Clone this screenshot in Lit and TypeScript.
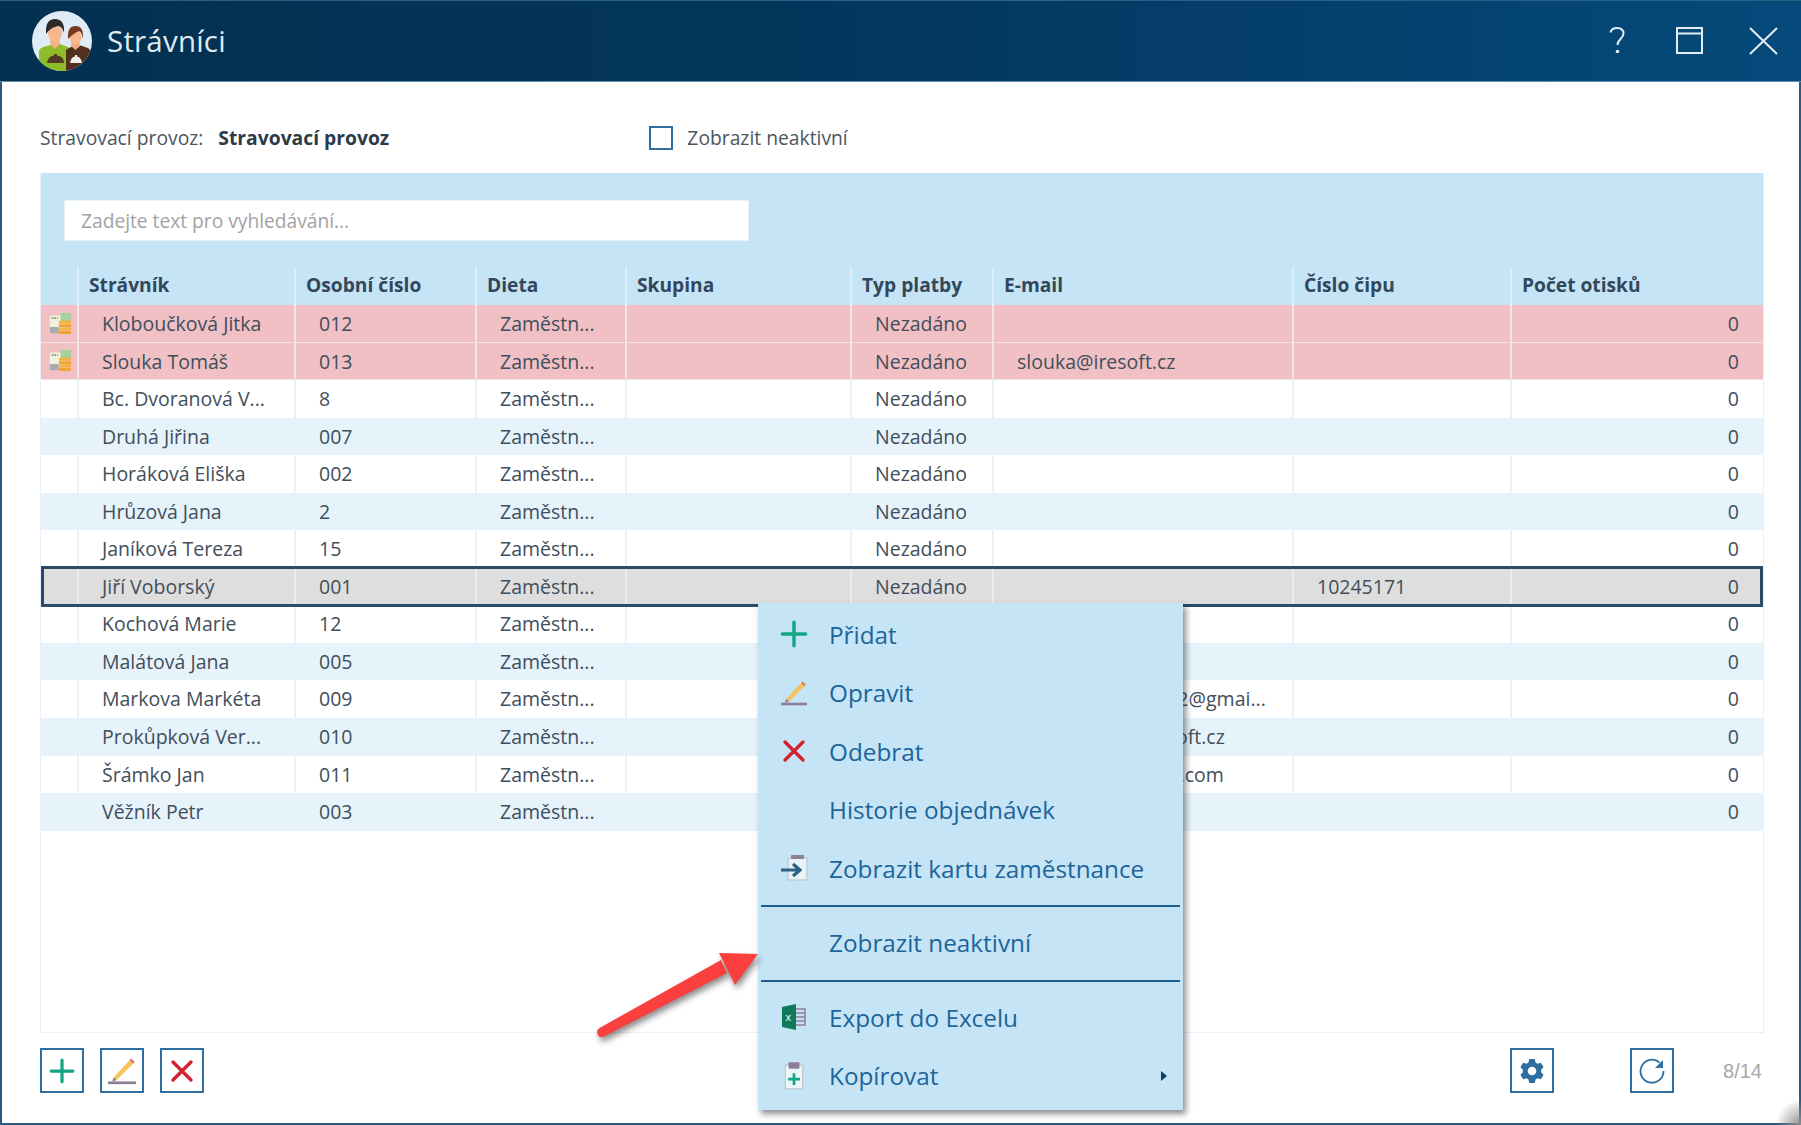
import { LitElement, html, css, svg } from "lit";
import { customElement } from "lit/decorators.js";

type Row = { name: string; no: string; mail?: string; chip?: string; kind?: string; coins?: boolean };
const rows: Row[] = [
  { name: "Kloboučková Jitka", no: "012", kind: "late", coins: true },
  { name: "Slouka Tomáš", no: "013", mail: "slouka@iresoft.cz", kind: "late", coins: true },
  { name: "Bc. Dvoranová V...", no: "8" },
  { name: "Druhá Jiřina", no: "007", kind: "alt" },
  { name: "Horáková Eliška", no: "002" },
  { name: "Hrůzová Jana", no: "2", kind: "alt" },
  { name: "Janíková Tereza", no: "15" },
  { name: "Jiří Voborský", no: "001", chip: "10245171", kind: "sel" },
  { name: "Kochová Marie", no: "12" },
  { name: "Malátová Jana", no: "005", kind: "alt" },
  { name: "Markova Markéta", no: "009", mail: "marketa.markova2@gmai...", },
  { name: "Prokůpková Ver...", no: "010", mail: "prokupkova@iresoft.cz", kind: "alt" },
  { name: "Šrámko Jan", no: "011", mail: "sramkojan@gmail.com" },
  { name: "Věžník Petr", no: "003", kind: "alt" },
];

const plus = svg`<path d="M12 2v20M2 12h20" stroke="#14a585" stroke-width="3" fill="none" stroke-linecap="round"/>`;
const pencil = svg`<path d="M1 25h26" stroke="#8c7f97" stroke-width="2.6"/><path d="M6 20 21 4l3.4 3.2L9 22.5l-3.8 1z" fill="#f7c35c"/><path d="M21 4l1.5-1.6 3.4 3.2-1.5 1.6z" fill="#e2735f"/><path d="M6 20l3 2.5-4 1.5z" fill="#8c7f97"/>`;
const cross = svg`<path d="M3 3l18 18M21 3 3 21" stroke="#d0222f" stroke-width="3.4" fill="none" stroke-linecap="round"/>`;

@customElement("app-root")
export class AppRoot extends LitElement {
  static styles = css`
    :host { display: block; width: 1801px; height: 1125px; overflow: hidden; position: relative; font-family: "Open Sans", sans-serif; }
    .win { box-sizing: border-box; width: 1801px; height: 1125px; display: flex; flex-direction: column; background: #fff; border: solid #2b5a7f; border-width: 0 2px 2px 2px; }
    .bar { height: 82px; margin: 0 -2px; flex: none; display: flex; align-items: center; padding: 0 23px 0 32px; gap: 15px; background: linear-gradient(90deg, #03304f 0%, #03365c 45%, #054a7b 100%); border-top: 1px solid #2a6187; border-bottom: 1px solid #5f8db0; box-sizing: border-box; color: #dfeaf2; }
    .bar .title { font-size: 29.5px; flex: 1; letter-spacing: 0.2px; margin-bottom: 1px; }
    .bar .tools { display: flex; align-items: center; gap: 46px; margin-bottom: 1px; }
    .bar .help { margin-right: 5px; }
    .content { flex: 1; display: flex; flex-direction: column; padding: 0 35px 0 38px; min-height: 0; }
    .filter { flex: none; display: flex; align-items: center; font-size: 19.3px; color: #4b5660; padding-top: 20px; box-sizing: border-box; height: 91px; }
    .filter b { color: #2c3b4a; margin-left: 15px; font-weight: 700; width: 431px; white-space: nowrap; }
    .check { width: 20px; height: 20px; border: 2px solid #2f6e9f; margin-right: 14px; flex: none; }
    .panel { flex: none; height: 860px; box-sizing: border-box; border: 1px solid #e9f0fb; border-top: 0; display: flex; flex-direction: column; }
    .search { background: #c5e4f6; height: 94px; flex: none; padding: 27px 24px 0 23px; box-sizing: border-box; }
    .search div { width: 685px; height: 41px; background: #fff; box-sizing: border-box; padding-left: 16px; line-height: 40px; color: #a2a2a2; font-size: 19.2px; border: 1px solid #e6f1f8; }
    .row { display: grid; flex: none; grid-template-columns: 36px 217px 181px 150px 225px 142px 300px 218px 1fr; height: 37.55px; font-size: 19.5px; color: #414e5b; box-sizing: border-box; }
    .row > div { border-left: 2px solid #e8f2fa; padding-left: 23px; white-space: nowrap; overflow: hidden; line-height: 37.5px; box-sizing: border-box; }
    .row > div:first-child { border-left: 0; padding: 0 0 0 2px; display: flex; align-items: center; justify-content: center; }
    .row > div:last-child { text-align: right; padding-right: 24px; }
    .head { background: #c5e4f6; height: 38px; font-weight: 700; font-size: 19.2px; color: #34475a; }
    .head > div { padding-left: 10px; line-height: 36px; border-color: #dcedf8; }
    .row.head > div:last-child { text-align: left; }
    .late { background: #f1c0c4; border-bottom: 1px solid #f4dfe3; }
    .late > div { border-color: #f6e3e7; }
    .alt { background: #e6f3fb; }
    .sel { background: #dedede; outline: 3px solid #2b4a68; outline-offset: -3px; position: relative; z-index: 1; height: 41.55px; margin: -2px 0; }
    .sel > div { border-color: #ececec; padding-top: 2px; }
    .foot { flex: 1; display: flex; align-items: flex-start; padding-top: 15px; }
    .btn { width: 44px; height: 45px; box-sizing: border-box; border: 2px solid #2f6e9f; display: flex; align-items: center; justify-content: center; margin-right: 16px; }
    .spacer { flex: 1; }
    .pager { font-family: "Liberation Sans", sans-serif; font-size: 20px; color: #a7a7a7; margin: 12px 2px 0 49px; }
    .gear { margin-right: 76px; }
    .refresh { margin-right: 0; }
    .menu { position: absolute; left: 758px; top: 603px; width: 425px; height: 507px; box-sizing: border-box; padding-top: 2px; background: #c5e4f6; box-shadow: 3px 4px 6px rgba(40, 50, 60, .55); color: #1d6499; font-size: 24.3px; z-index: 2; }
    .item { height: 58.5px; display: grid; grid-template-columns: 71px 1fr 22px; align-items: center; }
    .ico { display: flex; justify-content: center; padding-left: 0; width: 71px; }
    .sep { height: 2px; margin: 7.5px 3px 6.5px 3px; background: #1d5f8f; }
    .caret { width: 0; height: 0; border-left: 6px solid #0d3d66; border-top: 5px solid transparent; border-bottom: 5px solid transparent; }
    .arrow { position: absolute; left: 590px; top: 940px; overflow: visible; filter: drop-shadow(2px 4px 3px rgba(0, 0, 0, .45)); z-index: 3; }
    .corner { position: absolute; right: 0; bottom: 0; width: 24px; height: 24px; background: radial-gradient(circle at 100% 100%, #8f8f8f 0, rgba(255,255,255,0) 75%); }
  `;

  coins() {
    return html`<svg width="25" height="23" viewBox="0 0 28 26">
      <rect x="2" y="4" width="17" height="14" fill="#f3f1dc"/>
      <rect x="14" y="1" width="12" height="11" fill="#a8cf9c"/>
      <rect x="2" y="17" width="10" height="7" rx="1" fill="#a9aaad"/>
      <path d="M4 7h7" stroke="#7d9a74" stroke-width="2" stroke-dasharray="2 1"/>
      <rect x="12" y="10" width="14" height="3.4" rx="1.500" fill="#f6b13f"/>
      <rect x="12" y="13.800" width="14" height="3.4" rx="1.500" fill="#efa332"/>
      <rect x="12" y="17.600" width="14" height="3.4" rx="1.500" fill="#f6b13f"/>
      <rect x="12" y="21.400" width="14" height="3.4" rx="1.500" fill="#efa332"/>
    </svg>`;
  }

  avatar() {
    return html`<svg width="60" height="60" viewBox="0 0 60 60">
      <defs><clipPath id="av"><circle cx="30" cy="30" r="30"/></clipPath></defs>
      <g clip-path="url(#av)">
        <rect width="60" height="60" fill="#dfecf6"/>
        <path d="M7 60V40q1-4 8-5l7-2h6l8 3 2 2v22z" fill="#8fbd2a"/>
        <path d="M34 60V39l3-2 6-3h4l6 2q5 1 6 5v19z" fill="#52301f"/>
        <path d="M18 33l1-8h8l1 8-5 5z" fill="#f4b286"/>
        <ellipse cx="23" cy="22" rx="7" ry="9" fill="#f6b88c"/>
        <path d="M14 23q-1-15 9-15t9 14q-2-7-6-7-7 1-12 8z" fill="#2b2a28"/>
        <path d="M39 35l1-6h7l1 6-4.500 4z" fill="#f0ad82"/>
        <ellipse cx="43.500" cy="26" rx="6" ry="7.500" fill="#f5b78c"/>
        <path d="M36 28q-1-13 7.500-13T51 28q-1-7-4-8-5 2-11 8z" fill="#7a3a22"/>
        <path d="M15 52q1-7 7-7.500V43h3v1.500q7 .5 7 7.500z" fill="#4f3b26"/>
        <path d="M38 52q1-6 5-6.500V44h2v1.500q4 .5 5 6.500z" fill="#eee"/>
      </g>
    </svg>`;
  }

  render() {
    const cols = ["", "Strávník", "Osobní číslo", "Dieta", "Skupina", "Typ platby", "E-mail", "Číslo čipu", "Počet otisků"];
    return html`
      <div class="win">
        <div class="bar">
          ${this.avatar()}
          <div class="title">Strávníci</div>
          <div class="tools">
            <svg class="help" width="16" height="27" viewBox="0 0 16 27"><path d="M1.500 5.500Q2.500 1 8 1q6.500 0 6.500 5.500c0 5-6 5.500-6 11.500" fill="none" stroke="#e3edf4" stroke-width="2"/><circle cx="8.500" cy="24.500" r="1.800" fill="#e3edf4"/></svg>
            <svg width="27" height="27" viewBox="0 0 27 27"><path d="M1 1h25v25H1zM1 6.500h25" fill="none" stroke="#e3edf4" stroke-width="2"/></svg>
            <svg width="29" height="28" viewBox="0 0 29 28"><path d="M1 1l27 26M28 1 1 27" fill="none" stroke="#e3edf4" stroke-width="2"/></svg>
          </div>
        </div>
        <div class="content">
          <div class="filter">
            <span>Stravovací provoz:</span><b>Stravovací provoz</b>
            <span class="check"></span><span>Zobrazit neaktivní</span>
          </div>
          <div class="panel">
            <div class="search"><div>Zadejte text pro vyhledávání...</div></div>
            <div class="row head">${cols.map((c) => html`<div>${c}</div>`)}</div>
            ${rows.map((r) => html`
              <div class="row ${r.kind ?? ""}">
                <div>${r.coins ? this.coins() : ""}</div>
                <div>${r.name}</div>
                <div>${r.no}</div>
                <div>Zaměstn...</div>
                <div></div>
                <div>Nezadáno</div>
                <div>${r.mail ?? ""}</div>
                <div>${r.chip ?? ""}</div>
                <div>0</div>
              </div>`)}
          </div>
          <div class="foot">
            <div class="btn"><svg width="26" height="26" viewBox="0 0 24 24">${plus}</svg></div>
            <div class="btn"><svg width="30" height="30" viewBox="0 0 28 28">${pencil}</svg></div>
            <div class="btn"><svg width="24" height="24" viewBox="0 0 24 24">${cross}</svg></div>
            <div class="spacer"></div>
            <div class="btn gear"><svg width="26" height="26" viewBox="0 0 24 24"><path fill="#2f6e9f" fill-rule="evenodd" d="M9.500 1h5l.8 3.200 1.800 1 3.100-.9 2.500 4.300-2.300 2.300v2.200l2.300 2.300-2.500 4.300-3.100-.9-1.800 1-.8 3.200h-5l-.8-3.200-1.800-1-3.100.9-2.500-4.300 2.300-2.300v-2.200L1.300 8.600l2.500-4.300 3.100.9 1.800-1zM12 8a4 4 0 1 0 0 8 4 4 0 0 0 0-8z"/></svg></div>
            <div class="btn refresh"><svg width="28" height="28" viewBox="0 0 28 28"><path d="M21.500 5.500A11.500 11.500 0 1 0 25.500 14" fill="none" stroke="#2f6e9f" stroke-width="1.800"/><path d="M25 3v8h-8z" fill="#2f6e9f"/></svg></div>
            <div class="pager">8/14</div>
          </div>
        </div>
      </div>
      <div class="menu">
        <div class="item"><span class="ico"><svg width="28" height="28" viewBox="0 0 24 24">${plus}</svg></span>Přidat</div>
        <div class="item"><span class="ico"><svg width="28" height="28" viewBox="0 0 28 28">${pencil}</svg></span>Opravit</div>
        <div class="item"><span class="ico"><svg width="24" height="24" viewBox="0 0 24 24">${cross}</svg></span>Odebrat</div>
        <div class="item"><span class="ico"></span>Historie objednávek</div>
        <div class="item"><span class="ico"><svg width="28" height="26" viewBox="0 0 28 26">
          <rect x="8" y="3" width="19" height="22" fill="#e8f2f7" stroke="#c3cbd1" stroke-width="1.500"/><rect x="11" y="0" width="13" height="4" rx="1" fill="#8c7f97"/>
          <path d="M1 15h18M13 9l7 6-7 6" fill="none" stroke="#2a6088" stroke-width="3.200"/></svg></span>Zobrazit kartu zaměstnance</div>
        <div class="sep"></div>
        <div class="item"><span class="ico"></span>Zobrazit neaktivní</div>
        <div class="sep"></div>
        <div class="item"><span class="ico"><svg width="25" height="26" viewBox="0 0 25 26">
          <path d="M15 5h9v16h-9M15 9h9M15 13h9M15 17h9" fill="none" stroke="#8c7f97" stroke-width="1.500"/>
          <path d="M1 3 15 0v26L1 23z" fill="#0e7a5a"/><text x="4.500" y="17" font-size="11" fill="#fff" font-family="Liberation Sans">x</text></svg></span>Export do Excelu</div>
        <div class="item"><span class="ico"><svg width="20" height="28" viewBox="0 0 22 30">
          <rect x="1.500" y="3" width="19" height="26" fill="#eef6f8" stroke="#c3cbd1" stroke-width="1.500"/><rect x="5" y="0" width="12" height="7" rx="1" fill="#8c7f97"/>
          <path d="M11 12v13M4.500 18.500h13" stroke="#14a585" stroke-width="3"/></svg></span>Kopírovat<span class="caret"></span></div>
      </div>
      <svg class="arrow" width="170" height="100" viewBox="0 0 170 100">
        <path d="M9.500 88 131 20 137 33 15 96Q9 99 7.500 94 6 90 9.500 88z" fill="#f9403f"/>
        <path d="M129 13 168 14 145 45z" fill="#f9403f"/>
      </svg>
      <div class="corner"></div>
    `;
  }
}
